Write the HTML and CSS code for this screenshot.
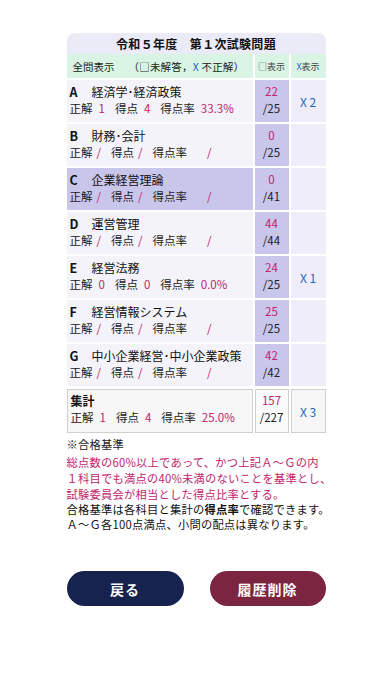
FILE: index.html
```html
<!DOCTYPE html>
<html lang="ja">
<head>
<meta charset="utf-8">
<link rel="stylesheet" href="styles.css">
</head>
<body>
<div class="page">
  <div class="table">
    <div class="title">令和５年度　第１次試験問題</div>
    <div class="head">
      <div class="hcell hmain"><span class="all">全問表示</span><span class="legend">（□未解答，<span class="blue">X</span> 不正解）</span></div>
      <div class="hcell hsmall">□表示</div>
      <div class="hcell hsmall"><span class="blue">X</span> 表示</div>
    </div>

    <div class="row">
      <div class="cell main">
        <div class="name"><b class="letter">A</b>経済学･経済政策</div>
        <div class="stats"><span>正解</span><span class="v">1</span><span>得点</span><span class="v">4</span><span>得点率</span><span class="v">33.3%</span></div>
      </div>
      <div class="cell score"><span class="red">22</span><span>/25</span></div>
      <div class="cell xc">X 2</div>
    </div>

    <div class="row">
      <div class="cell main">
        <div class="name"><b class="letter">B</b>財務･会計</div>
        <div class="stats"><span>正解</span><span class="v s">/</span><span>得点</span><span class="v s">/</span><span>得点率</span><span class="v w">/</span></div>
      </div>
      <div class="cell score"><span class="red">0</span><span>/25</span></div>
      <div class="cell xc"></div>
    </div>

    <div class="row active">
      <div class="cell main">
        <div class="name"><b class="letter">C</b>企業経営理論</div>
        <div class="stats"><span>正解</span><span class="v s">/</span><span>得点</span><span class="v s">/</span><span>得点率</span><span class="v w">/</span></div>
      </div>
      <div class="cell score"><span class="red">0</span><span>/41</span></div>
      <div class="cell xc"></div>
    </div>

    <div class="row">
      <div class="cell main">
        <div class="name"><b class="letter">D</b>運営管理</div>
        <div class="stats"><span>正解</span><span class="v s">/</span><span>得点</span><span class="v s">/</span><span>得点率</span><span class="v w">/</span></div>
      </div>
      <div class="cell score"><span class="red">44</span><span>/44</span></div>
      <div class="cell xc"></div>
    </div>

    <div class="row">
      <div class="cell main">
        <div class="name"><b class="letter">E</b>経営法務</div>
        <div class="stats"><span>正解</span><span class="v">0</span><span>得点</span><span class="v">0</span><span>得点率</span><span class="v">0.0%</span></div>
      </div>
      <div class="cell score"><span class="red">24</span><span>/25</span></div>
      <div class="cell xc">X 1</div>
    </div>

    <div class="row">
      <div class="cell main">
        <div class="name"><b class="letter">F</b>経営情報システム</div>
        <div class="stats"><span>正解</span><span class="v s">/</span><span>得点</span><span class="v s">/</span><span>得点率</span><span class="v w">/</span></div>
      </div>
      <div class="cell score"><span class="red">25</span><span>/25</span></div>
      <div class="cell xc"></div>
    </div>

    <div class="row">
      <div class="cell main">
        <div class="name"><b class="letter">G</b>中小企業経営･中小企業政策</div>
        <div class="stats"><span>正解</span><span class="v s">/</span><span>得点</span><span class="v s">/</span><span>得点率</span><span class="v w">/</span></div>
      </div>
      <div class="cell score"><span class="red">42</span><span>/42</span></div>
      <div class="cell xc"></div>
    </div>

    <div class="row total">
      <div class="cell main">
        <div class="name"><b>集計</b></div>
        <div class="stats"><span>正解</span><span class="v">1</span><span>得点</span><span class="v">4</span><span>得点率</span><span class="v">25.0%</span></div>
      </div>
      <div class="cell score"><span class="red">157</span><span>/227</span></div>
      <div class="cell xc">X 3</div>
    </div>
  </div>

  <div class="notes">
    <div class="n1">※合格基準</div>
    <div class="n2 red">総点数の60%以上であって、かつ上記Ａ～Ｇの内</div>
    <div class="n3 red"><div>１科目でも満点の40%未満のないことを基準とし、</div><div>試験委員会が相当とした得点比率とする。</div></div>
    <div class="n4">合格基準は各科目と集計の<b>得点率</b>で確認できます。</div>
    <div class="n5">Ａ～Ｇ各100点満点、小問の配点は異なります。</div>
  </div>

  <div class="buttons">
    <div class="btn back">戻る</div>
    <div class="btn del">履歴削除</div>
  </div>
</div>
</body>
</html>
```

FILE: styles.css
```css
html, body {
  margin: 0;
  padding: 0;
  background: #ffffff;
}
body {
  font-family: "Noto Sans CJK JP", "Noto Sans", sans-serif;
  color: #1a1a1a;
  width: 392px;
  height: 696px;
}
.page {
  width: 259px;
  margin: 0 auto;
  padding-top: 33px;
}
.table {
  display: flex;
  flex-direction: column;
  gap: 2px;
}
.title {
  height: 21px;
  line-height: 22px;
  background: #ebeaf7;
  border-radius: 8px 8px 0 0;
  text-align: center;
  font-weight: 700;
  font-size: 12px;
  letter-spacing: 0.3px;
  color: #111;
  margin-bottom: -2px;
}
.head {
  display: grid;
  grid-template-columns: 1fr 34px 35px;
  gap: 2px;
  height: 24px;
}
.hcell {
  background: #d9f4e4;
  display: flex;
  align-items: center;
}
.hmain {
  padding-left: 6px;
  font-size: 10.5px;
  color: #222;
}
.all { margin-right: 14px; }
.legend { letter-spacing: 0.2px; }
.hsmall {
  justify-content: center;
  font-size: 9px;
  color: #444;
}
.blue { color: #2466c2; }
.red { color: #c0246c; }
.row {
  display: grid;
  grid-template-columns: 1fr 34px 35px;
  gap: 2px;
  height: 42px;
}
.cell { background: #f3f3f9; }
.main {
  padding: 3px 0 0 3px;
  font-size: 11.5px;
  line-height: 17px;
  overflow: hidden;
  white-space: nowrap;
}
.name { font-size: 12px; color: #111; }
.letter {
  display: inline-block;
  width: 22px;
  font-weight: 700;
  font-size: 12.5px;
}
.stats { display: flex; color: #222; }
.stats .v {
  color: #c0246c;
  margin: 0 10px 0 6px;
}
.stats .v.s { margin: 0 10px 0 4px; }
.stats .v.w { margin-left: 20px; }
.score {
  background: #c9c6ec;
  display: flex;
  flex-direction: column;
  align-items: center;
  padding-top: 3px;
  line-height: 17px;
  font-size: 11.5px;
  color: #222;
}
.xc {
  background: #eeedf9;
  display: flex;
  align-items: center;
  justify-content: center;
  font-size: 12px;
  color: #2466c2;
}
.row.active .main { background: #c9c6ec; }
.row.total { height: 44px; margin-top: 1px; }
.row.total .cell {
  border: 1px solid #cfcfcf;
  background: #f7f7f7;
}
.row.total .main { padding: 2px 0 0 3px; }
.row.total .name b { font-size: 12px; font-weight: 700; }
.row.total .score {
  background: #fafafa;
  padding-top: 2px;
}
.notes {
  margin-top: 3px;
  font-size: 11.3px;
  letter-spacing: 0.2px;
  white-space: nowrap;
}
.n1 { line-height: 16px; color: #222; }
.n2 { line-height: 16px; margin-top: 2px; }
.n3 { line-height: 16px; margin-top: 0; }
.n4 { line-height: 15px; margin-top: 0; color: #111; }
.n4 b { font-weight: 700; }
.n5 { line-height: 15px; color: #111; }
.buttons {
  display: flex;
  justify-content: space-between;
  margin-top: 39px;
}
.btn {
  width: 117px;
  height: 35px;
  border-radius: 18px;
  color: #fff;
  font-weight: 700;
  font-size: 14px;
  display: flex;
  align-items: center;
  justify-content: center;
  letter-spacing: 1px;
}
.back { background: #17234f; }
.del { background: #7b2541; width: 116px; }
```
